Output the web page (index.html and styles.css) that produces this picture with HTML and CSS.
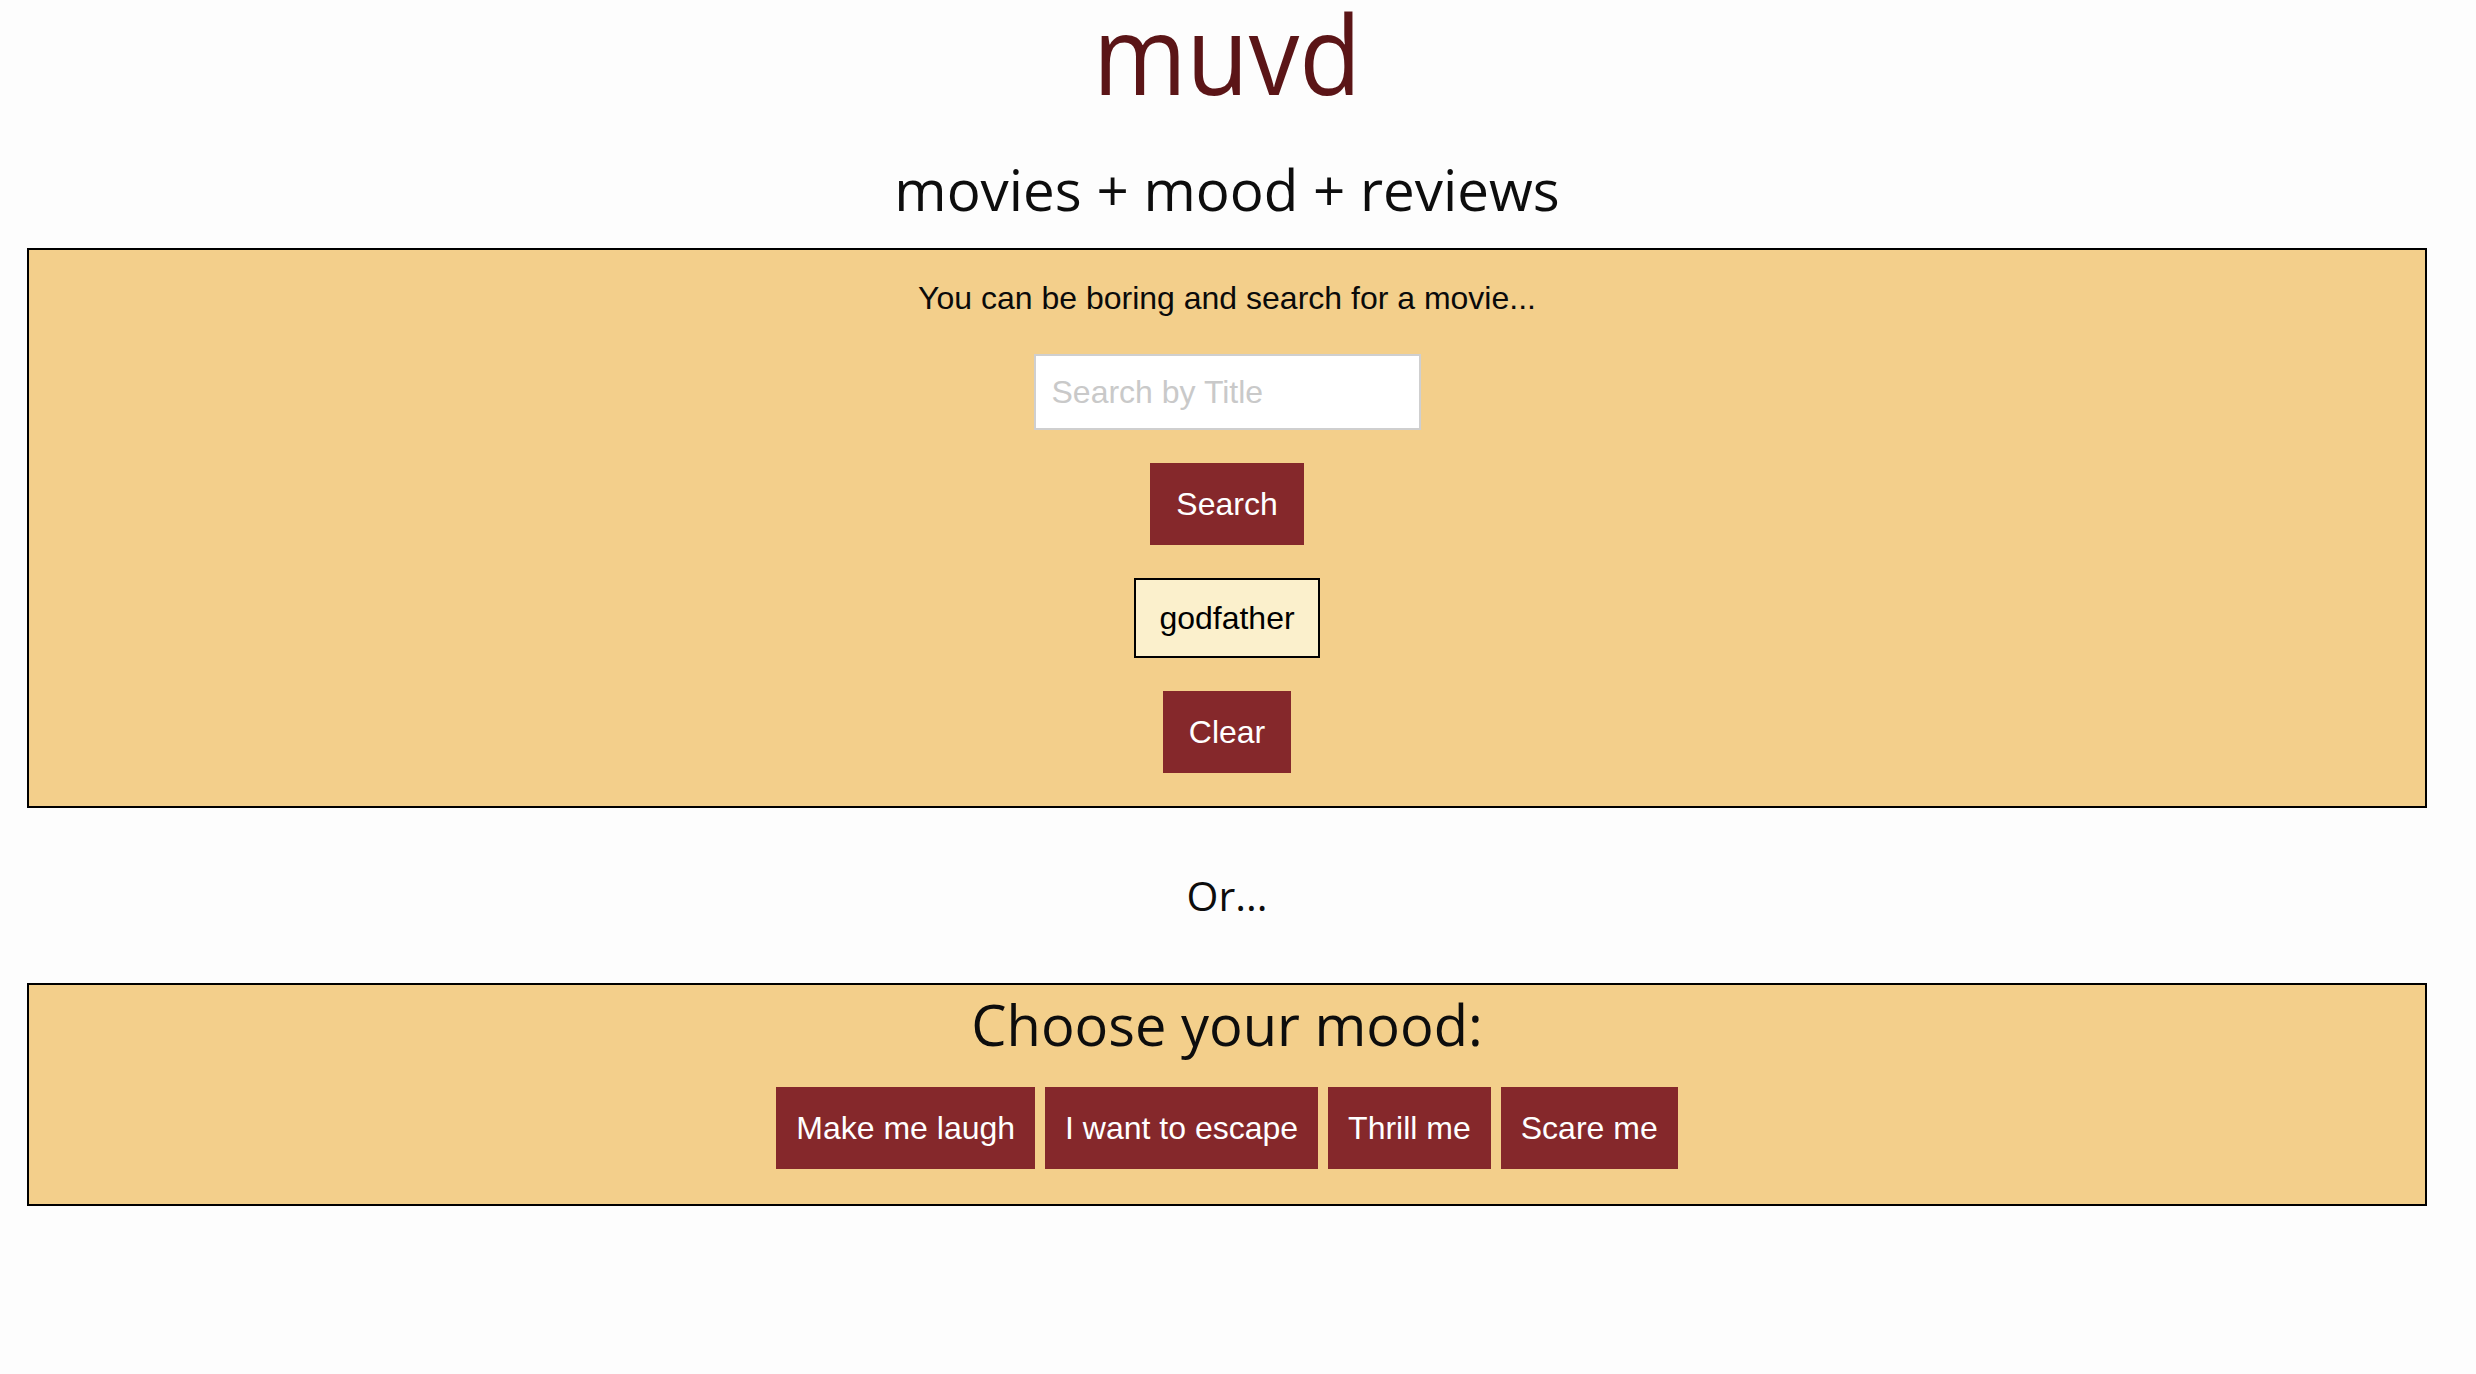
FILE: index.html
```html
<!DOCTYPE html>
<html lang="en">
<head>
<meta charset="utf-8">
<title>muvd</title>
<link rel="stylesheet" href="styles.css">
</head>
<body>
<div class="page">
  <h1 class="logo">muvd</h1>
  <h2 class="tagline">movies + mood + reviews</h2>

  <section class="panel search-panel">
    <p class="intro">You can be boring and search for a movie...</p>
    <input class="search-input" type="text" placeholder="Search by Title">
    <button class="btn">Search</button>
    <div class="chip">godfather</div>
    <button class="btn">Clear</button>
  </section>

  <p class="or">Or...</p>

  <section class="panel mood-panel">
    <h2 class="mood-title">Choose your mood:</h2>
    <div class="mood-row">
      <button class="btn mood-btn">Make me laugh</button>
      <button class="btn mood-btn">I want to escape</button>
      <button class="btn mood-btn">Thrill me</button>
      <button class="btn mood-btn">Scare me</button>
    </div>
  </section>
</div>
</body>
</html>
```

FILE: styles.css
```css
* {
  box-sizing: border-box;
}

html, body {
  margin: 0;
  padding: 0;
  background: #fdfdfd;
}

body {
  font-family: "Liberation Sans", Arial, Helvetica, sans-serif;
  font-size: 32px;
  color: #000;
  min-height: 1374px;
}

.page {
  padding: 0 49px 0 27px;
}

.logo {
  margin: 0;
  font-family: "Open Sans", "DejaVu Sans", sans-serif;
  font-weight: 400;
  font-size: 110px;
  line-height: 0.95;
  color: #5b1517;
  text-align: center;
  transform: scaleX(0.92);
}

.tagline {
  margin: 51px 0 25px;
  font-family: "Open Sans", "DejaVu Sans", sans-serif;
  font-weight: 400;
  font-size: 56.5px;
  line-height: 1.2;
  color: #0d0d0d;
  text-align: center;
}

.panel {
  background: #f3cf8b;
  border: 2px solid #000;
  display: flex;
  flex-direction: column;
  align-items: center;
}

.search-panel {
  padding: 30px 0 33px;
  gap: 33px;
}

.intro {
  margin: 0 0 5px;
  line-height: 36px;
  color: #0a0a0a;
}

.search-input {
  width: 387px;
  height: 76px;
  border: 2px solid #cfcfcf;
  background: #fff;
  padding: 0 16px;
  font-family: "Liberation Sans", Arial, sans-serif;
  font-size: 32px;
  color: #000;
  outline: none;
}

.search-input::placeholder {
  color: #c9c9c9;
}

.btn {
  background: #85282b;
  color: #fff;
  border: none;
  font-family: "Liberation Sans", Arial, sans-serif;
  font-size: 32px;
  line-height: 38px;
  padding: 22px 26px;
  cursor: pointer;
}

.chip {
  background: #fbf0cc;
  border: 2px solid #000;
  padding: 19px 23px;
  line-height: 38px;
  color: #000;
}

.or {
  margin: 63px 0;
  font-family: "Open Sans", "DejaVu Sans", sans-serif;
  font-size: 41px;
  line-height: 1.2;
  text-align: center;
  color: #0d0d0d;
}

.mood-panel {
  padding: 6px 0 35px;
  gap: 28px;
}

.mood-title {
  margin: 0;
  font-family: "Open Sans", "DejaVu Sans", sans-serif;
  font-weight: 400;
  font-size: 56px;
  line-height: 1.2;
  color: #0d0d0d;
}

.mood-row {
  display: flex;
  gap: 10px;
}

.mood-btn {
  padding: 22px 20px;
}
```
